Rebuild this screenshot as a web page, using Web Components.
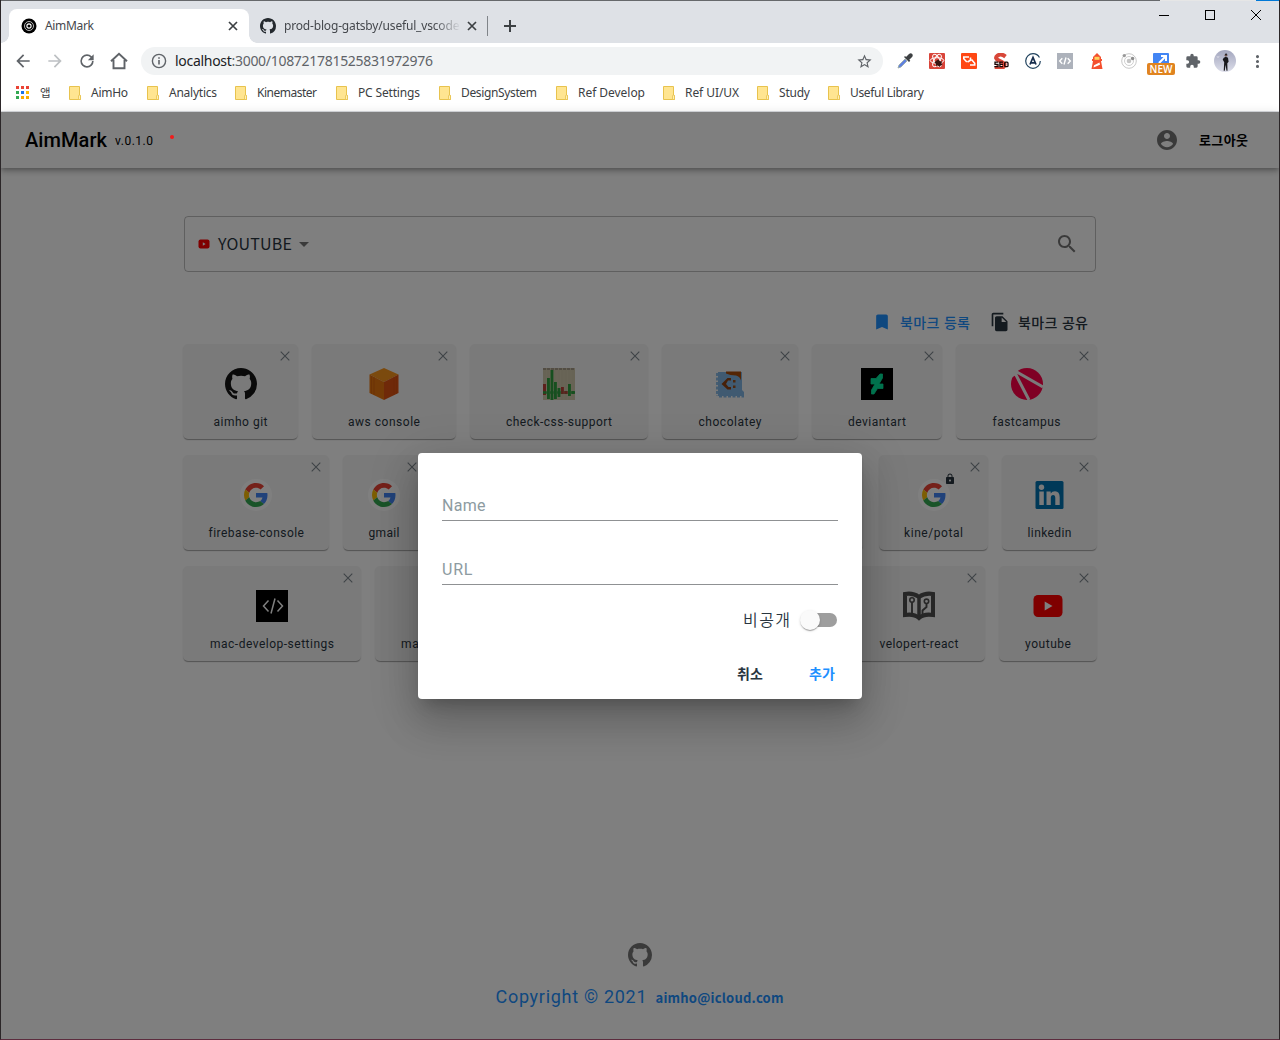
<!DOCTYPE html>
<html lang="ko">
<head>
<meta charset="utf-8">
<title>AimMark</title>
<style>
  html, body { margin: 0; height: 100%; overflow: hidden; }
  body { font-family: Roboto, "Noto Sans CJK KR", sans-serif; }
</style>
</head>
<body>
<browser-window></browser-window>
<script>
class Base extends HTMLElement {
  connectedCallback() {
    if (this.shadowRoot) return;
    this.attachShadow({ mode: 'open' }).innerHTML = '<style>:host,*{box-sizing:border-box}svg{display:block;flex:none}</style>' + this.render();
  }
}

/* Text run that spreads its letters over the width given in "w". */
class FitText extends Base {
  render() { return '<style>:host{display:inline-block;white-space:nowrap;flex:none}</style><slot></slot>'; }
  connectedCallback() {
    super.connectedCallback();
    const w = +this.getAttribute('w');
    const natural = this.getBoundingClientRect().width;
    const nodes = this.shadowRoot.querySelector('slot').assignedNodes({ flatten: true });
    const n = nodes.map(x => x.textContent).join('').length;
    if (!w || !natural || n < 2) return;
    this.style.letterSpacing = ((w - natural) / (n - 1)).toFixed(3) + 'px';
    this.style.width = w + 'px';
  }
}

const OCTO = 'M8 0C3.58 0 0 3.58 0 8c0 3.54 2.29 6.53 5.47 7.59.4.07.55-.17.55-.38 0-.19-.01-.82-.01-1.49-2.01.37-2.53-.49-2.69-.94-.09-.23-.48-.94-.82-1.13-.28-.15-.68-.52-.01-.53.63-.01 1.08.58 1.23.82.72 1.21 1.87.87 2.33.66.07-.52.28-.87.51-1.07-1.78-.2-3.64-.89-3.64-3.95 0-.87.31-1.59.82-2.15-.08-.2-.36-1.02.08-2.12 0 0 .67-.21 2.2.82.64-.18 1.32-.27 2-.27.68 0 1.36.09 2 .27 1.53-1.04 2.2-.82 2.2-.82.44 1.1.16 1.92.08 2.12.51.56.82 1.27.82 2.15 0 3.07-1.87 3.75-3.65 3.95.29.25.54.73.54 1.48 0 1.07-.01 1.93-.01 2.2 0 .21.15.46.55.38A8.013 8.013 0 0016 8c0-4.42-3.58-8-8-8z';
const bars = [[0,16,11,'#b84038'],[4,10,21,'#2f9e3f'],[7.5,2,30,'#2f9e3f'],[11,14,17,'#2f9e3f'],[14.5,20,9,'#2f9e3f'],[18,19,7,'#b84038'],[21.5,23,3,'#b84038'],[25,16,12,'#2f9e3f'],[28.5,23,3,'#2f9e3f']];
const ICONS = {
  octocat: ['0 0 16 16', `<path fill="currentColor" d="${OCTO}"/>`],
  tabx: ['0 0 10 10', '<path d="M1 1l8 8M9 1l-8 8" stroke="#3c4043" stroke-width="1.7"/>'],
  cardx: ['0 0 10 10', '<path d="M.7.7l8.6 8.6M9.3.7L.7 9.3" stroke="#7d868d" stroke-width="1.1"/>'],
  target: ['0 0 16 16', '<circle cx="8" cy="8" r="7.5"/><circle cx="8" cy="8" r="4.5" fill="none" stroke="#ccc" stroke-width=".9"/><circle cx="8" cy="8" r="2.1" fill="none" stroke="#fff" stroke-width="1.1"/>'],
  plus: ['0 0 12 12', '<path d="M6 0v12M0 6h12" stroke="#3c4043" stroke-width="2"/>'],
  back: ['0 0 24 24', '<path fill="currentColor" d="M20 11H7.83l5.59-5.59L12 4l-8 8 8 8 1.41-1.41L7.83 13H20v-2z"/>'],
  fwd: ['0 0 24 24', '<path fill="currentColor" d="M12 4l-1.41 1.41L16.17 11H4v2h12.17l-5.58 5.59L12 20l8-8z"/>'],
  reload: ['0 0 24 24', '<path fill="currentColor" d="M17.65 6.35A7.958 7.958 0 0012 4a8 8 0 108 8h-2a6 6 0 11-1.76-4.24L13 11h7V4l-2.35 2.35z"/>'],
  home: ['0 0 18 18', '<path d="M3.5 8v8.2h11V8M1 9.3L9 1.8l8 7.5" fill="none" stroke="currentColor" stroke-width="1.9"/>'],
  info: ['0 0 16 16', '<circle cx="8" cy="8" r="6.6" fill="none" stroke="#5f6368" stroke-width="1.4"/><path d="M8 7v4.6M8 4.2v1.6" stroke="#5f6368" stroke-width="1.6"/>'],
  star: ['0 0 24 24', '<path fill="#5f6368" d="M22 9.24l-7.19-.62L12 2 9.19 8.63 2 9.24l5.46 4.73L5.82 21 12 17.27 18.18 21l-1.63-7.03L22 9.24zM12 15.4l-3.76 2.27 1-4.28-3.32-2.88 4.38-.38L12 6.1l1.71 4.04 4.38.38-3.32 2.88 1 4.28L12 15.4z"/>'],
  apps: ['0 0 13 13', ['#ea4335','#ea4335','#ea4335','#34a853','#1a73e8','#fbbc04','#34a853','#f9ab00','#f9ab00'].map((c,i)=>`<rect x="${i%3*5}" y="${(i/3|0)*5}" width="3" height="3" fill="${c}"/>`).join('')],
  folder: ['0 0 12 14', '<path d="M.5.5h10v9h1v4H.5z" fill="#ffe591" stroke="#e8c34e"/><path d="M9.5 13.500V10q0-1 1-1t1 1v3.5z" fill="#fff0b5" stroke="#e8c34e" stroke-width=".8"/>'],
  min: ['0 0 10 10', '<path d="M0 5.500h10" stroke="#000"/>'],
  max: ['0 0 10 10', '<rect x=".5" y=".5" width="9" height="9" fill="none" stroke="#000"/>'],
  close: ['0 0 10 10', '<path d="M0 0l10 10M10 0L0 10" stroke="#000" stroke-width="1"/>'],
  dropper: ['0 0 16 16', '<path d="M1 15l1-3 6-6 2 2-6 6z" fill="#5f80e0" stroke="#9aa" stroke-width=".9"/><path d="M7 4l5 5 1.300-1.300-1-1 3-3q1-2-.3-3t-3 .3l-3 3-.9-.9z" fill="#3d4042"/>'],
  react: ['0 0 16 16', '<rect width="16" height="16" rx="1" fill="#d9453a"/><g fill="none" stroke="#fff" stroke-width="1"><ellipse cx="8" cy="7.500" rx="6.800" ry="2.800"/><ellipse cx="8" cy="7.500" rx="6.800" ry="2.800" transform="rotate(60 8 7.500)"/><ellipse cx="8" cy="7.500" rx="6.800" ry="2.800" transform="rotate(120 8 7.500)"/></g><path d="M7.500 7.500l2-1 1 1.500 2.500.5-.5 2 1 1.500-2 .5-1 1.500-1.500-1.500-2 .5V11L5.500 9.500z" fill="#391512"/>'],
  coder: ['0 0 16 16', '<rect width="16" height="16" rx="1" fill="#ff4713"/><path d="M8 4H2.800v1.800L5.800 9M9 12h4.700v-1.800L10.500 6.500M9.500 4.500v2.800L6.500 9" fill="none" stroke="#fff" stroke-width="1.600"/>'],
  seo: ['0 0 16 16', '<path d="M12.500 3.600Q8 0 4.500 2.600T6 7.500t5.500 3.500-2 4-7-1.500" fill="none" stroke="#d84739" stroke-width="4"/><path d="M5.300 9.200H2v2.200h3v2.300H1.300M10 9.200H6.900v4.500H10M7 11.400h3" fill="none" stroke="#180505" stroke-width="1.300"/><rect x="11.700" y="9.200" width="3.300" height="4.500" rx="1" fill="none" stroke="#180505" stroke-width="1.300"/>'],
  apollo: ['0 0 16 16', '<circle cx="8" cy="8" r="7.300" fill="none" stroke="#22445f" stroke-width="1.200" stroke-dasharray="42 4"/><path d="M5 11.500L8 4.500l3 7M6 9.800h4" fill="none" stroke="#172d4d" stroke-width="1.700"/>'],
  code: ['0 0 16 16', '<rect width="16" height="16" fill="#adb2bb"/><path d="M5.300 5.300L2.700 8l2.600 2.700M10.700 5.300L13.300 8l-2.600 2.700M9 4.500L7 11.500" fill="none" stroke="#fff" stroke-width="1.400"/>'],
  light: ['0 0 16 16', '<path d="M4 4l4-4 4 4v2h1v2h-1l1.500 8h-11L4 8H3V6h1z" fill="#f4502f"/><path d="M5.500 3.800h5v3h-5z" fill="#ffd35c"/><path d="M5 12.300l5.500-2.800.5 2.300-6.500 2.800z" fill="#fff"/>'],
  orbit: ['0 0 16 16', '<circle cx="8" cy="8" r="7.300" fill="none" stroke="#c8c8c8" stroke-width="1"/><circle cx="8" cy="8" r="4.500" fill="none" stroke="#d0d0d0"/><circle cx="8" cy="8" r="2.300" fill="#c4c4c4"/><circle cx="3.300" cy="2.600" r="1.700" fill="#999"/><circle cx="11.600" cy="5.500" r="1.700" fill="#8c8c8c"/>'],
  shot: ['0 0 16 16', '<rect width="16" height="16" rx="1" fill="#4285f4"/><path d="M8 3h5v5M13 3L6 10" fill="none" stroke="#fff" stroke-width="2"/>'],
  puzzle: ['0 0 24 24', '<path fill="#5f6368" d="M20.500 11H19V7a2 2 0 00-2-2h-4V3.500a2.500 2.500 0 00-5 0V5H4a2 2 0 00-2 2v3.800h1.500a2.700 2.700 0 010 5.400H2V20a2 2 0 002 2h3.800v-1.500a2.700 2.700 0 015.400 0V22H17a2 2 0 002-2v-4h1.500a2.500 2.500 0 000-5z"/>'],
  avatar: ['0 0 22 22', '<defs><linearGradient id="g" x2="0" y2="1"><stop stop-color="#a3a6be"/><stop offset="1" stop-color="#dcdde9"/></linearGradient></defs><circle cx="11" cy="11" r="11" fill="url(#g)"/><circle cx="12" cy="5.200" r="1.300" fill="#6a4f4a"/><path d="M10.800 4.800q.2-1.300 1.300-1.300t1.200 1.200z" fill="#17171b"/><path d="M9.800 7.700l2-1 2.200 1 .6 4-1.300 1.500.2 7.500h-1l-.9-6-.8 6H9.700l.5-8.500-1.500-2.700z" fill="#17171b"/><path d="M2.500 6.500h3M3 7.500h2" stroke="#d8d9e4" stroke-width=".6"/>'],
  kebab: ['0 0 24 24', '<path fill="#5f6368" d="M12 7.300a2.200 2.200 0 100-4.400 2.200 2.200 0 000 4.400zm0 2.500a2.200 2.200 0 100 4.400 2.200 2.200 0 000-4.400zm0 6.900a2.200 2.200 0 100 4.400 2.200 2.200 0 000-4.400z"/>'],
  account: ['0 0 24 24', '<path fill="currentColor" d="M12 2C6.480 2 2 6.480 2 12s4.480 10 10 10 10-4.480 10-10S17.520 2 12 2zm0 3c1.660 0 3 1.340 3 3s-1.340 3-3 3-3-1.340-3-3 1.340-3 3-3zm0 14.200c-2.500 0-4.710-1.280-6-3.220.03-1.990 4-3.080 6-3.080 1.990 0 5.970 1.090 6 3.080-1.290 1.940-3.500 3.220-6 3.220z"/>'],
  search: ['0 0 24 24', '<path fill="currentColor" d="M15.500 14h-.79l-.28-.27C15.410 12.590 16 11.110 16 9.500 16 5.910 13.090 3 9.500 3S3 5.910 3 9.500 5.910 16 9.500 16c1.610 0 3.090-.59 4.230-1.570l.27.28v.79l5 4.990L20.490 19l-4.990-5zm-6 0C7.010 14 5 11.990 5 9.500S7.010 5 9.500 5 14 7.010 14 9.500 11.990 14 9.500 14z"/>'],
  drop: ['0 0 24 24', '<path fill="currentColor" d="M7 10l5 5 5-5z"/>'],
  bookmark: ['0 0 24 24', '<path fill="currentColor" d="M17 3H7c-1.100 0-1.990.9-1.990 2L5 21l7-3 7 3V5c0-1.100-.9-2-2-2z"/>'],
  copy: ['0 0 24 24', '<path fill="currentColor" d="M16 1H4c-1.100 0-2 .9-2 2v14h2V3h12V1zm-1 4l6 6v10c0 1.100-.9 2-2 2H7.990C6.890 23 6 22.100 6 21l.01-14c0-1.100.89-2 1.990-2h7zm-1 7h5.500L14 6.500V12z"/>'],
  lock: ['0 0 24 24', '<path fill="#29353f" d="M18 8h-1V6c0-2.760-2.240-5-5-5S7 3.240 7 6v2H6c-1.100 0-2 .9-2 2v10c0 1.100.9 2 2 2h12c1.100 0 2-.9 2-2V10c0-1.100-.9-2-2-2zm-6 9c-1.100 0-2-.9-2-2s.9-2 2-2 2 .9 2 2-.9 2-2 2zm3.100-9H8.900V6a3.100 3.100 0 016.200 0v2z"/>'],
  youtube: ['0 0 32 32', '<rect x="1.500" y="5" width="29" height="22" rx="4.500" fill="#f00"/><path d="M12.700 11.500v9l7.800-4.500z" fill="#fff"/>'],
  ytsmall: ['0 0 12 12', '<rect x=".5" y="1.500" width="11" height="9" rx="2" fill="#f00"/><path d="M4.800 4.300v3.400l2.800-1.700z" fill="#fff"/>'],
  google: ['0 0 48 48', '<circle cx="24" cy="24" r="24" fill="#fff"/><g transform="translate(6 6) scale(.75)"><path fill="#EA4335" d="M24 9.500c3.540 0 6.710 1.220 9.210 3.600l6.850-6.850C35.900 2.380 30.470 0 24 0 14.620 0 6.510 5.380 2.560 13.220l7.980 6.190C12.430 13.720 17.740 9.500 24 9.500z"/><path fill="#4285F4" d="M46.980 24.550c0-1.570-.15-3.090-.38-4.550H24v9.020h12.940c-.58 2.960-2.260 5.480-4.780 7.180l7.730 6c4.510-4.180 7.090-10.360 7.090-17.650z"/><path fill="#FBBC05" d="M10.530 28.590c-.48-1.450-.76-2.990-.76-4.590s.27-3.140.76-4.590l-7.980-6.190C.92 16.460 0 20.120 0 24s.92 7.540 2.560 10.780l7.970-6.190z"/><path fill="#34A853" d="M24 48c6.480 0 11.930-2.130 15.890-5.810l-7.730-6c-2.150 1.450-4.920 2.300-8.160 2.300-6.260 0-11.570-4.220-13.470-9.910l-7.980 6.190C6.510 42.620 14.620 48 24 48z"/></g>'],
  aws: ['0 0 32 32', '<path d="M16 0l14.500 6.500L16 14 1.500 6.500z" fill="#f7941d"/><path d="M1.500 6.500L16 14v18L1.500 25z" fill="#e8760f"/><path d="M30.500 6.500L16 14v18l14.500-7z" fill="#df5312"/><path d="M3.500 8v18M6 9v18M26 9v18M28.500 8v18" stroke="#c9500c" stroke-opacity=".6" stroke-width=".7"/>'],
  css: ['0 0 32 32', '<rect width="32" height="32" fill="#cfc6aa"/><path d="M0 1h32" stroke="#7c6e68" stroke-width="1" stroke-dasharray="3 1"/>' + bars.map(b=>`<rect x="${b[0]}" y="${b[1]}" width="3" height="${b[2]}" fill="${b[3]}"/>`).join('') + '<path d="M0 24.500h32" stroke="#2f9e3f" stroke-width="2.500"/><path d="M18 24.500h7" stroke="#b84038" stroke-width="2.500"/><path d="M3.500 2v30M7 2v30M10.500 2v30M14 2v30M17.500 2v30M21 2v30M24.500 2v30M28 2v30" stroke="#e6ddc4" stroke-opacity=".4" stroke-width=".5"/>'],
  choco: ['0 0 32 32', '<path d="M4 4h24v18l2 2v4H4z" fill="#80b5e3"/><path d="M3 5v23M5 28.500h25" stroke="#80b5e3" stroke-width="1.800" stroke-dasharray="3 1.500"/><path d="M12 3.500h15v9q-1-4-5-5-6 0-10-2z" fill="#a84b08"/><path d="M7.500 16l6-6H17v2.500h-3L12 16l2.500 3H17v2.500h-3.500z" fill="#8f4212"/><path d="M19 12h2.500v2.500H19zM19 17.500h2.500V20H19z" fill="#96511f"/>'],
  deviant: ['0 0 32 32', '<rect width="32" height="32"/><path d="M10 10.500h5L19 6h2.500v4L18 16h4v4.500h-5.500L13 26h-2.500v-4l3.500-6h-4z" fill="#00e59b" stroke="#00e59b" stroke-width=".8" stroke-linejoin="round" filter="blur(.6px)"/>'],
  fast: ['0 0 32 32', '<circle cx="16" cy="16" r="16" fill="#ff0048"/><path d="M5 3.500l27 15.500M4 5l14 27" stroke="#f5f5f5" stroke-width="3"/><path d="M0 0h8L5 7 0 10z" fill="#f5f5f5"/>'],
  linkedin: ['0 0 32 32', '<g transform="translate(-.5 0)"><rect x="2" y="2" width="28" height="28" rx="1.500" fill="#0073b1"/><circle cx="8" cy="8.300" r="2.700" fill="#f5f5f5"/><path d="M5.800 12.500h4.500V26H5.800zM13 12.500h4.200v2q1.300-2.300 4.300-2.300 4.700 0 4.700 6V26h-4.400v-7q0-3-2.200-3-2.300 0-2.300 3v7H13z" fill="#f5f5f5"/></g>'],
  mac: ['0 0 32 32', '<rect width="32" height="32"/><path d="M12.500 10.500L7.500 16l5 5.500M21.500 10.500l5 5.500-5 5.500M19 8.500L15 23.500" fill="none" stroke="#fff" stroke-width="1.500"/>'],
  book: ['0 0 32 32', '<path d="M2 4q8-1.500 14 3 6-4.500 14-3v21q-9-1.500-14 3-5-4.500-14-3z" fill="none" stroke="#4e4e4e" stroke-width="4"/><path d="M16 7v21" stroke="#4e4e4e" stroke-width="3.500"/><circle cx="9" cy="10" r="2.200" fill="none" stroke="#4e4e4e" stroke-width="1.600"/><path d="M9 12v12M19.500 24v-3.500l4-3.500v-3.500" fill="none" stroke="#4e4e4e" stroke-width="1.900"/><circle cx="23.500" cy="11.300" r="2.200" fill="none" stroke="#4e4e4e" stroke-width="1.600"/>'],
};

class UiIcon extends Base {
  render() {
    const [box, body] = ICONS[this.getAttribute('name')];
    const s = this.getAttribute('size') || 16, h = this.getAttribute('h') || s;
    return `<style>:host{display:block;flex:none;width:${s}px;height:${h}px}</style><svg width="${s}" height="${h}" viewBox="${box}">${body}</svg>`;
  }
}

class TabStrip extends Base {
  render() { return `<style>
    :host{display:flex;height:42px;background:#dee1e6;padding:8px 0 0 8px;font:12px/16px "Noto Sans","Noto Sans CJK KR",sans-serif;color:#3c4043}
    .tab{width:240px;height:34px;display:flex;align-items:center;padding:0 11px 0 12px;color:#45484d}
    .tab.on{background:#fff;border-radius:8px 8px 0 0;position:relative}
    .on::before,.on::after{content:"";position:absolute;bottom:0;width:8px;height:8px}
    .on::before{left:-8px;background:radial-gradient(circle at 0 0,transparent 7.500px,#fff 8px)}
    .on::after{right:-8px;background:radial-gradient(circle at 100% 0,transparent 7.500px,#fff 8px)}
    .tab fit-text{margin-left:8px}
    .title{flex:1;margin-left:8px;overflow:hidden;-webkit-mask:linear-gradient(90deg,#000 150px,transparent 177px)}
    .tab .title fit-text{margin:0;display:block}
    .sep{width:1px;height:20px;background:#808489;margin:7px 16px 0 -2px}
    .plus{margin-top:11px}
    .ctl{margin-left:auto;display:flex;gap:36px;padding:1px 18px 0 0}
  </style>
  <div class="tab on"><ui-icon name="target" size="16"></ui-icon><fit-text w="49">AimMark</fit-text><ui-icon name="tabx" size="10" style="margin-left:auto"></ui-icon></div>
  <div class="tab" style="padding-right:12px"><ui-icon name="octocat" size="16" style="color:#24292e;margin-left:-1px"></ui-icon><div class="title"><fit-text w="182">prod-blog-gatsby/useful_vscode</fit-text></div><ui-icon name="tabx" size="10" style="margin-left:6px"></ui-icon></div>
  <div class="sep"></div><ui-icon class="plus" name="plus" size="12"></ui-icon>
  <div class="ctl"><ui-icon name="min" size="10"></ui-icon><ui-icon name="max" size="10"></ui-icon><ui-icon name="close" size="10"></ui-icon></div>`; }
}

class NavBar extends Base {
  render() { return `<style>
    :host{display:flex;align-items:center;height:36px;background:#fff;padding-left:12px;color:#5f6368;font:14px/18px "Noto Sans","Noto Sans CJK KR",sans-serif}
    .nav{display:flex;gap:12px;width:128px;align-items:center}
    .box{width:742px;height:28px;border-radius:14px;background:#f1f3f4;display:flex;align-items:center;padding:0 10px}
    .box fit-text{margin:0 0 1px 8px}
    .box b{font-weight:400;color:#202124}
    .ext{display:flex;align-items:center;gap:16px;margin-left:14px}
    .new{position:relative;width:16px;height:16px}
    .new span{position:absolute;left:-6px;top:10px;width:28px;height:12px;border-radius:2px;background:#e08420;color:#fff;font:600 10px/12px "Open Sans",sans-serif;text-align:center}
  </style>
  <div class="nav"><ui-icon name="back" size="20"></ui-icon><ui-icon name="fwd" size="20" style="color:#bdc0c3"></ui-icon><ui-icon name="reload" size="20"></ui-icon><ui-icon name="home" size="18" style="margin-left:1px"></ui-icon></div>
  <div class="box"><ui-icon name="info" size="16"></ui-icon><fit-text w="258"><b>localhost</b>:3000/108721781525831972976</fit-text><ui-icon name="star" size="17" style="margin-left:auto"></ui-icon></div>
  <div class="ext">${['dropper','react','coder','seo','apollo','code','light','orbit'].map(n=>`<ui-icon name="${n}"></ui-icon>`).join('')}
  <div class="new"><ui-icon name="shot"></ui-icon><span>NEW</span></div><ui-icon name="puzzle"></ui-icon><ui-icon name="avatar" size="22" style="margin:0 -3px"></ui-icon><ui-icon name="kebab" size="17"></ui-icon></div>`; }
}

class BookmarkBar extends Base {
  render() {
    const items = [['AimHo',37,78],['Analytics',48,88],['Kinemaster',60,101],['PC Settings',62,103],['DesignSystem',76,117],['Ref Develop',67,107],['Ref UI/UX',54,94],['Study',31,71],['Useful Library',74,97]];
    return `<style>
    :host{display:flex;align-items:center;height:33px;background:#fff;border-bottom:1px solid #dadce0;padding:0 0 5px 15px;font:12px/16px "Noto Sans","Noto Sans CJK KR",sans-serif;color:#3c4043}
    .i{display:flex;align-items:center;gap:10px;flex:none}
    </style><div class="i" style="width:53px"><ui-icon name="apps" size="13"></ui-icon><fit-text style="font:11.500px/16px 'Noto Sans CJK KR';margin:0 0 2px 1px">앱</fit-text></div>` +
    items.map(([t,w,W])=>`<div class="i" style="width:${W}px"><ui-icon name="folder" size="12" h="14"></ui-icon><fit-text w="${w}">${t}</fit-text></div>`).join('');
  }
}

class AppHeader extends Base {
  render() { return `<style>
    :host{display:flex;align-items:center;height:56px;padding:0 31px 0 24px;background:#fff;position:relative;color:#000;box-shadow:0 2px 4px -1px rgba(0,0,0,.2),0 4px 5px rgba(0,0,0,.14),0 1px 10px rgba(0,0,0,.12)}
    .n{font:500 20px Roboto} .v{font:12px Roboto;margin:2px 0 0 8px}
    .o{margin:0 0 0 20px;font:700 13px/20px "Noto Sans CJK KR",sans-serif}
  </style><fit-text class="n" w="82">AimMark</fit-text><fit-text class="v" w="38">v.0.1.0</fit-text>
  <ui-icon name="account" size="24" style="margin-left:auto;color:rgba(0,0,0,.54)"></ui-icon><fit-text class="o" w="49">로그아웃</fit-text>`; }
}

class SearchBox extends Base {
  render() { return `<style>
    :host{display:flex;align-items:center;width:912px;height:56px;border:1px solid rgba(0,0,0,.25);border-radius:4px;padding:0 16px 0 13px;font:16px/24px "Noto Sans CJK KR",sans-serif;color:#29353f}
    fit-text{margin:0 0 2px 8px}
  </style><ui-icon name="ytsmall" size="12"></ui-icon><fit-text w="74">YOUTUBE</fit-text><ui-icon name="drop" size="24" style="color:rgba(0,0,0,.54)"></ui-icon><ui-icon name="search" size="24" style="margin-left:auto;color:rgba(0,0,0,.54)"></ui-icon>`; }
}

class ActionRow extends Base {
  render() { return `<style>
    :host{display:flex;align-items:center;justify-content:flex-end;height:24px;padding-right:8px;color:#29353f;font:500 14px/24px "Noto Sans CJK KR",sans-serif}
    .b{color:#1e90ff}
  </style><ui-icon class="b" name="bookmark" size="20"></ui-icon><fit-text class="b" w="70" style="margin:0 20px 0 8px">북마크 등록</fit-text><ui-icon name="copy" size="20"></ui-icon><fit-text w="70" style="margin-left:8px">북마크 공유</fit-text>`; }
}

class MarkCard extends Base {
  render() {
    const a = n => this.getAttribute(n);
    return `<style>
    :host{display:flex;flex-direction:column;align-items:center;position:relative;flex:none;width:${a('width')}px;height:95px;padding-top:24px;background:#f5f5f5;border-radius:5px;color:#29353f;font:12px/18px Roboto;box-shadow:0 2px 1px -1px rgba(0,0,0,.2),0 1px 1px rgba(0,0,0,.14),0 1px 2px rgba(0,0,0,.06)}
    .x{position:absolute;right:8px;top:7px} .l{position:absolute;left:calc(50% + 10px);top:18px} fit-text{margin-top:13px}
    .i{color:#151515}
    </style><ui-icon class="x" name="cardx" size="10"></ui-icon>${this.hasAttribute('locked')?'<ui-icon class="l" name="lock" size="12"></ui-icon>':''}
    ${a('icon')?`<ui-icon class="i" name="${a('icon')}" size="32"></ui-icon>`:''}<fit-text w="${a('tw')}"><slot></slot></fit-text>`;
  }
}

class MarkGrid extends Base {
  render() {
    const rows = [
      [['aimho git',115,'octocat',54,14],['aws console',144,'aws',72,14],['check-css-support',178,'css',106,14],['chocolatey',136,'choco',63,14],['deviantart',130,'deviant',58,14],['fastcampus',141,'fast',68,0]],
      [['firebase-console',146,'google',95,14],['gmail',82,'google',31,14],['',130,'',0,14],['',130,'',0,14],['',136,'',0,16],['kine/potal',109,'google',59,14],['linkedin',95,'linkedin',44,0]],
      [['mac-develop-settings',178,'mac',124,14],['mac-settings',130,'mac',78,14],['',150,'',0,14],['',156,'',0,14],['velopert-react',132,'book',79,14],['youtube',98,'youtube',46,0]]];
    return `<style>:host{display:flex;flex-direction:column;gap:16px;margin-left:-1px}.r{display:flex}</style>` + rows.map(r=>`<div class="r">`+r.map(([t,w,i,tw,g])=>
      `<mark-card width="${w}" icon="${i}" tw="${tw}" ${t==='kine/potal'?'locked':''} style="margin-right:${g}px">${t}</mark-card>`).join('')+`</div>`).join('');
  }
}

class AppFooter extends Base {
  render() { return `<style>
    :host{display:flex;flex-direction:column;align-items:center;color:#1e90ff}
    .c{display:flex;align-items:baseline;margin:16px 1px 0 0;font:18px/28px Roboto}
    .m{font:700 13px/28px "Noto Sans CJK KR",sans-serif;margin-left:9px}
  </style><ui-icon name="octocat" size="24" style="color:rgba(0,0,0,.54)"></ui-icon><div class="c"><fit-text w="151">Copyright © 2021</fit-text><fit-text class="m" w="128">aimho@icloud.com</fit-text></div>`; }
}

class AddDialog extends Base {
  render() { return `<style>
    :host{display:flex;flex-direction:column;width:444px;height:246px;padding:40px 24px 0;background:#fff;border-radius:4px;color:#29353f;box-shadow:0 11px 15px -7px rgba(0,0,0,.2),0 24px 38px 3px rgba(0,0,0,.14),0 9px 46px 8px rgba(0,0,0,.12)}
    .f{height:28px;border-bottom:1px solid #8f9193;font:16px/26px Roboto;color:#8d9ba1;margin-bottom:36px}
    .s{display:flex;justify-content:flex-end;align-items:center;height:24px;margin-top:-13px;font:350 16px/24px "Noto Sans CJK KR",sans-serif}
    .s fit-text{margin-bottom:2px}
    .t{position:relative;width:34px;height:14px;border-radius:7px;background:#9e9e9e;margin:0 1px 0 13px}
    .t::after{content:"";position:absolute;left:-3px;top:-3px;width:20px;height:20px;border-radius:50%;background:#fafafa;box-shadow:0 2px 1px -1px rgba(0,0,0,.2),0 1px 1px rgba(0,0,0,.14),0 1px 3px rgba(0,0,0,.12)}
    .a{display:flex;justify-content:flex-end;gap:46px;padding-right:3px;margin-top:29px;font:700 14px/24px "Noto Sans CJK KR",sans-serif}
  </style><div class="f"><fit-text w="43.5">Name</fit-text></div><div class="f"><fit-text w="30.5">URL</fit-text></div>
  <div class="s"><fit-text w="47">비공개</fit-text><div class="t"></div></div>
  <div class="a"><fit-text w="26">취소</fit-text><fit-text w="26" style="color:#1e90ff">추가</fit-text></div>`; }
}

class AppPage extends Base {
  render() { return `<style>
    :host{display:flex;flex-direction:column;position:relative;flex:1;background:#fff}
    main{width:912px;margin:48px auto 0 183px;flex:1}
    search-box{margin-bottom:38px} action-row{margin-bottom:10px}
    app-footer{margin-bottom:27px}
    .shade{position:absolute;inset:0;background:rgba(0,0,0,.5);display:flex;align-items:center;justify-content:center}
    .dot{position:absolute;left:169px;top:23px;width:4px;height:4px;border-radius:50%;background:#f21b1b}
  </style><app-header></app-header><main><search-box></search-box><action-row></action-row><mark-grid></mark-grid></main><app-footer></app-footer>
  <div class="shade"><i class="dot"></i><add-dialog></add-dialog></div>`; }
}

class BrowserWindow extends Base {
  render() { return `<style>
    :host{display:flex;flex-direction:column;width:1280px;height:1040px;overflow:hidden;border:1px solid #2b2628;border-top:0;border-bottom-color:#5c2c3e}
    .top{height:1px;flex:none;margin:0 -1px;background:linear-gradient(90deg,#66686b 1160px,#e6e6e6 1160px 1256px,#0078d7 1256px)}
    tab-strip,nav-bar,bookmark-bar{flex:none}
  </style><div class="top"></div><tab-strip></tab-strip><nav-bar></nav-bar><bookmark-bar></bookmark-bar><app-page></app-page>`; }
}

for (const [n, c] of Object.entries({'ui-icon':UiIcon,'fit-text':FitText,'mark-card':MarkCard,'mark-grid':MarkGrid,'tab-strip':TabStrip,'nav-bar':NavBar,'bookmark-bar':BookmarkBar,'app-header':AppHeader,'search-box':SearchBox,'action-row':ActionRow,'app-footer':AppFooter,'add-dialog':AddDialog,'app-page':AppPage,'browser-window':BrowserWindow})) customElements.define(n, c);
</script>
</body>
</html>
